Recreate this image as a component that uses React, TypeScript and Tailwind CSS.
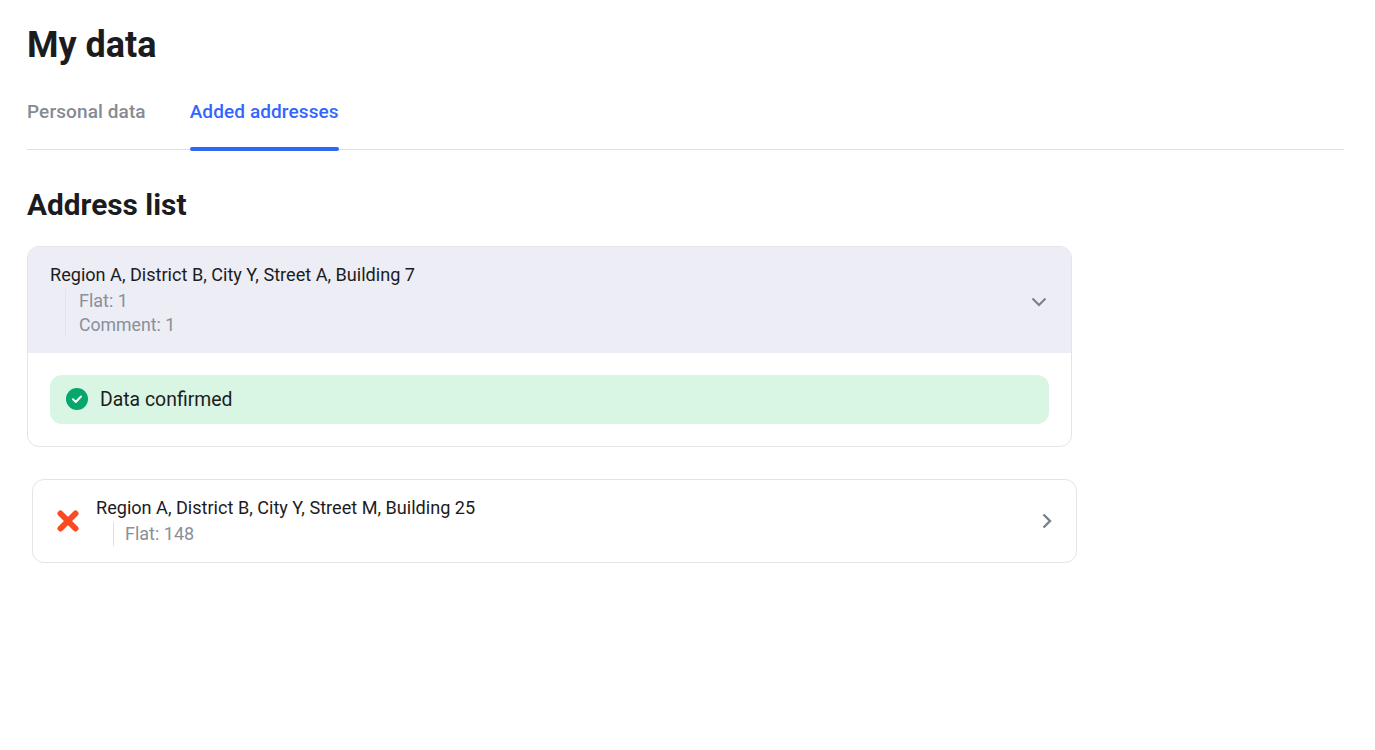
function ChevronDown() {
  return (
    <svg width="16" height="10" viewBox="0 0 16 10" fill="none">
      <path d="M1.5 1.5L8 8L14.5 1.5" stroke="#77808c" strokeWidth="2" />
    </svg>
  );
}

function ChevronRight() {
  return (
    <svg width="10" height="16" viewBox="0 0 10 16" fill="none">
      <path d="M1.5 1.5L8 8L1.5 14.5" stroke="#77808c" strokeWidth="2.4" />
    </svg>
  );
}

function CheckBadge() {
  return (
    <svg width="22" height="22" viewBox="0 0 22 22" fill="none" className="mb-[1px] shrink-0">
      <circle cx="11" cy="11" r="11" fill="#06a76c" />
      <path d="M7 11.3L9.8 14L15 8.5" stroke="#ffffff" strokeWidth="2" strokeLinecap="round" strokeLinejoin="round" />
    </svg>
  );
}

function CrossIcon() {
  return (
    <svg width="22" height="22" viewBox="0 0 22 22" fill="none" className="shrink-0">
      <path d="M3.5 3.5L18.5 18.5M18.5 3.5L3.5 18.5" stroke="#fb4a22" strokeWidth="6" strokeLinecap="round" />
    </svg>
  );
}

export default function App() {
  return (
    <div className="min-h-[750px] bg-white pl-[27px] pr-[31px] pt-[23px] font-['Roboto',sans-serif] text-[#1c1c1e]">
      <h1 className="text-[36px] leading-[44px] font-bold">My data</h1>

      <div className="mt-[16px] flex gap-[44px] border-b border-[#dde0ea]">
        <button className="h-[66px] pb-[7px] text-[19px] tracking-[0.1px] font-medium text-[#858b94]">Personal data</button>
        <button className="relative h-[66px] pb-[7px] text-[19px] tracking-[0.1px] font-medium text-[#3366ff]">
          Added addresses
          <span className="absolute bottom-[-2px] left-0 right-0 h-[4px] rounded-full bg-[#2f66f6]"></span>
        </button>
      </div>

      <h2 className="mt-[36px] text-[29.8px] leading-[38px] font-bold">Address list</h2>

      <div className="mt-[22px] w-[1045px] overflow-hidden rounded-[12px] border border-[#e4e4e7]">
        <div className="flex h-[106px] items-center justify-between bg-[#ecedf5] pl-[22px] pr-[24px]">
          <div>
            <p className="text-[18.1px] leading-[24px]">Region A, District B, City Y, Street A, Building 7</p>
            <div className="ml-[15px] mt-[2px] border-l border-[#e2e3ea] pl-[13px] text-[18px] leading-[24px] text-[#8a8f99]">
              <p>Flat: 1</p>
              <p className="text-[17.7px]">Comment: 1</p>
            </div>
          </div>
          <span className="mt-[4px] flex">
            <ChevronDown />
          </span>
        </div>
        <div className="p-[22px]">
          <div className="flex h-[49px] items-center gap-[12px] rounded-[12px] bg-[#d9f5e4] pl-[16px]">
            <CheckBadge />
            <span className="text-[19.4px]">Data confirmed</span>
          </div>
        </div>
      </div>

      <div className="ml-[5px] mt-[32px] flex h-[84px] w-[1045px] items-center justify-between rounded-[12px] border border-[#e4e4e7] pl-[24px] pr-[24px]">
        <div className="flex items-center gap-[18px]">
          <CrossIcon />
          <div>
            <p className="-ml-[1px] text-[18.1px] leading-[24px]">Region A, District B, City Y, Street M, Building 25</p>
            <div className="ml-[16px] mt-[2px] border-l border-[#e0e1e8] pl-[11px] text-[18px] leading-[24px] text-[#8a8f99]">
              <p>Flat: 148</p>
            </div>
          </div>
        </div>
        <ChevronRight />
      </div>
    </div>
  );
}
